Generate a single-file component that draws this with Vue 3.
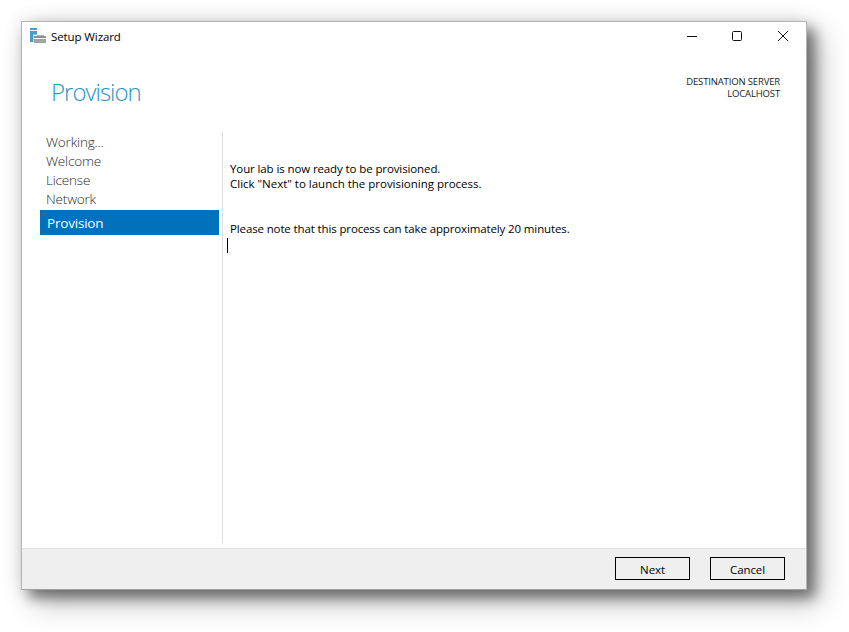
<script setup>
const steps = ['Working...', 'Welcome', 'License', 'Network']
</script>

<template>
  <div class="page">
    <div class="window">
      <div class="titlebar">
        <div class="title-left">
          <svg class="app-icon" width="17" height="17" viewBox="0 0 17 17" shape-rendering="crispEdges">
            <rect x="0" y="0" width="7" height="2" fill="#4a9cc6" />
            <rect x="0" y="3" width="7" height="3" fill="#4a9cc6" />
            <rect x="0" y="6" width="3" height="8" fill="#4a9cc6" />
            <rect x="3" y="6" width="1" height="8" fill="#a9d2e6" />
            <rect x="4" y="6" width="3" height="1" fill="#7fbad8" />
            <rect x="7" y="7" width="7" height="1" fill="#b5b5b5" />
            <rect x="4" y="8" width="12" height="2" fill="#8f8f8f" />
            <rect x="4" y="11" width="12" height="4" fill="#a3a3a3" />
          </svg>
          <span class="title-text">Setup Wizard</span>
        </div>
        <div class="controls">
          <svg width="12" height="12" viewBox="0 0 12 12"><path d="M1 6.5h10" stroke="#111" stroke-width="1" /></svg>
          <svg width="12" height="12" viewBox="0 0 12 12"><rect x="1.5" y="1.5" width="9" height="9" rx="1" fill="none" stroke="#111" /></svg>
          <svg class="close" width="12" height="12" viewBox="0 0 12 12"><path d="M1 1l10 10M11 1L1 11" stroke="#111" stroke-width="1" /></svg>
        </div>
      </div>
      <div class="header">
        <h1 class="heading">Provision</h1>
        <div class="server">
          <div>DESTINATION SERVER</div>
          <div>LOCALHOST</div>
        </div>
      </div>
      <div class="main">
        <nav class="nav">
          <div v-for="s in steps" :key="s" class="step">{{ s }}</div>
          <div class="step-active">Provision</div>
        </nav>
        <div class="content">
          <p class="line first">Your lab is now ready to be provisioned.</p>
          <p class="line second">Click "Next" to launch the provisioning process.</p>
          <p class="line note">Please note that this process can take approximately 20 minutes.</p>
          <div class="caret"></div>
        </div>
      </div>
      <div class="footer">
        <button class="btn">Next</button>
        <button class="btn">Cancel</button>
      </div>
    </div>
  </div>
</template>

<style>
html, body { margin: 0; background: #fff; }
</style>

<style scoped>
.page {
  width: 849px;
  height: 632px;
  padding: 21px 0 0 21px;
  box-sizing: border-box;
  background: #fff;
  overflow: hidden;
  font-family: "Open Sans", "Noto Sans", sans-serif;
  color: #000;
}
.window {
  width: 786px;
  height: 569px;
  box-sizing: border-box;
  border: 1px solid #b4b4b4;
  border-bottom-color: #a0a0a0;
  background: #fff;
  display: flex;
  flex-direction: column;
  box-shadow: 8px 8px 12px rgba(0, 0, 0, 0.42), 12px 12px 28px rgba(0, 0, 0, 0.28), 0 0 18px rgba(0, 0, 0, 0.1);
}
.titlebar {
  height: 29px;
  flex: none;
  display: flex;
  justify-content: space-between;
  align-items: center;
  padding: 0 17px 0 8px;
}
.title-left { display: flex; align-items: center; gap: 4px; }
.controls { display: flex; gap: 33px; align-items: center; margin-top: -1px; }
.close { margin-left: 1px; }
.title-text { font-size: 11.5px; letter-spacing: -0.1px; }
.header {
  height: 80px;
  flex: none;
  display: flex;
  justify-content: space-between;
  padding: 0 26px 0 29px;
}
.heading {
  margin: 25px 0 0;
  font-size: 24px;
  line-height: 32px;
  font-weight: 300;
  letter-spacing: -1px;
  color: #2a94c4;
}
.server {
  margin-top: 25px;
  text-align: right;
  font-size: 9.5px;
  line-height: 12px;
  letter-spacing: -0.15px;
  color: #222;
}
.main { flex: 1; display: flex; min-height: 0; padding-bottom: 5px; }
.nav {
  width: 201px;
  flex: none;
  box-sizing: border-box;
  padding: 1px 3px 0 18px;
  border-right: 1px solid #dcdcdc;
  margin-top: 1px;
}
.step {
  height: 19px;
  line-height: 19px;
  padding-left: 6px;
  font-size: 13.5px;
  font-weight: 300;
  letter-spacing: -0.18px;
  color: #2b2b2b;
}
.step-active {
  margin-top: 1px;
  height: 25px;
  box-sizing: border-box;
  padding: 1px 0 0 7px;
  line-height: 25px;
  font-size: 13.5px;
  letter-spacing: -0.2px;
  background: #0072bc;
  color: #fff;
}
.content { flex: 1; padding: 30px 0 0 7px; }
.line {
  margin: 0;
  font-size: 11.5px;
  line-height: 15px;
  letter-spacing: -0.13px;
}
.first { letter-spacing: -0.11px; }
.second { letter-spacing: -0.01px; }
.note { margin-top: 30px; }
.caret {
  width: 1px;
  height: 15px;
  background: #000;
  margin: 2px 0 0 -3px;
}
.footer {
  height: 41px;
  flex: none;
  box-sizing: border-box;
  background: #efefef;
  border-top: 1px solid #e2e2e2;
  display: flex;
  justify-content: flex-end;
  gap: 20px;
  padding: 8px 21px 0 0;
}
.btn {
  width: 75px;
  height: 23px;
  box-sizing: border-box;
  border: 1px solid #000;
  border-radius: 0;
  background: #efefef;
  padding: 1px 0 0;
  font-family: inherit;
  font-size: 11.5px;
  letter-spacing: -0.1px;
  color: #000;
}
</style>
